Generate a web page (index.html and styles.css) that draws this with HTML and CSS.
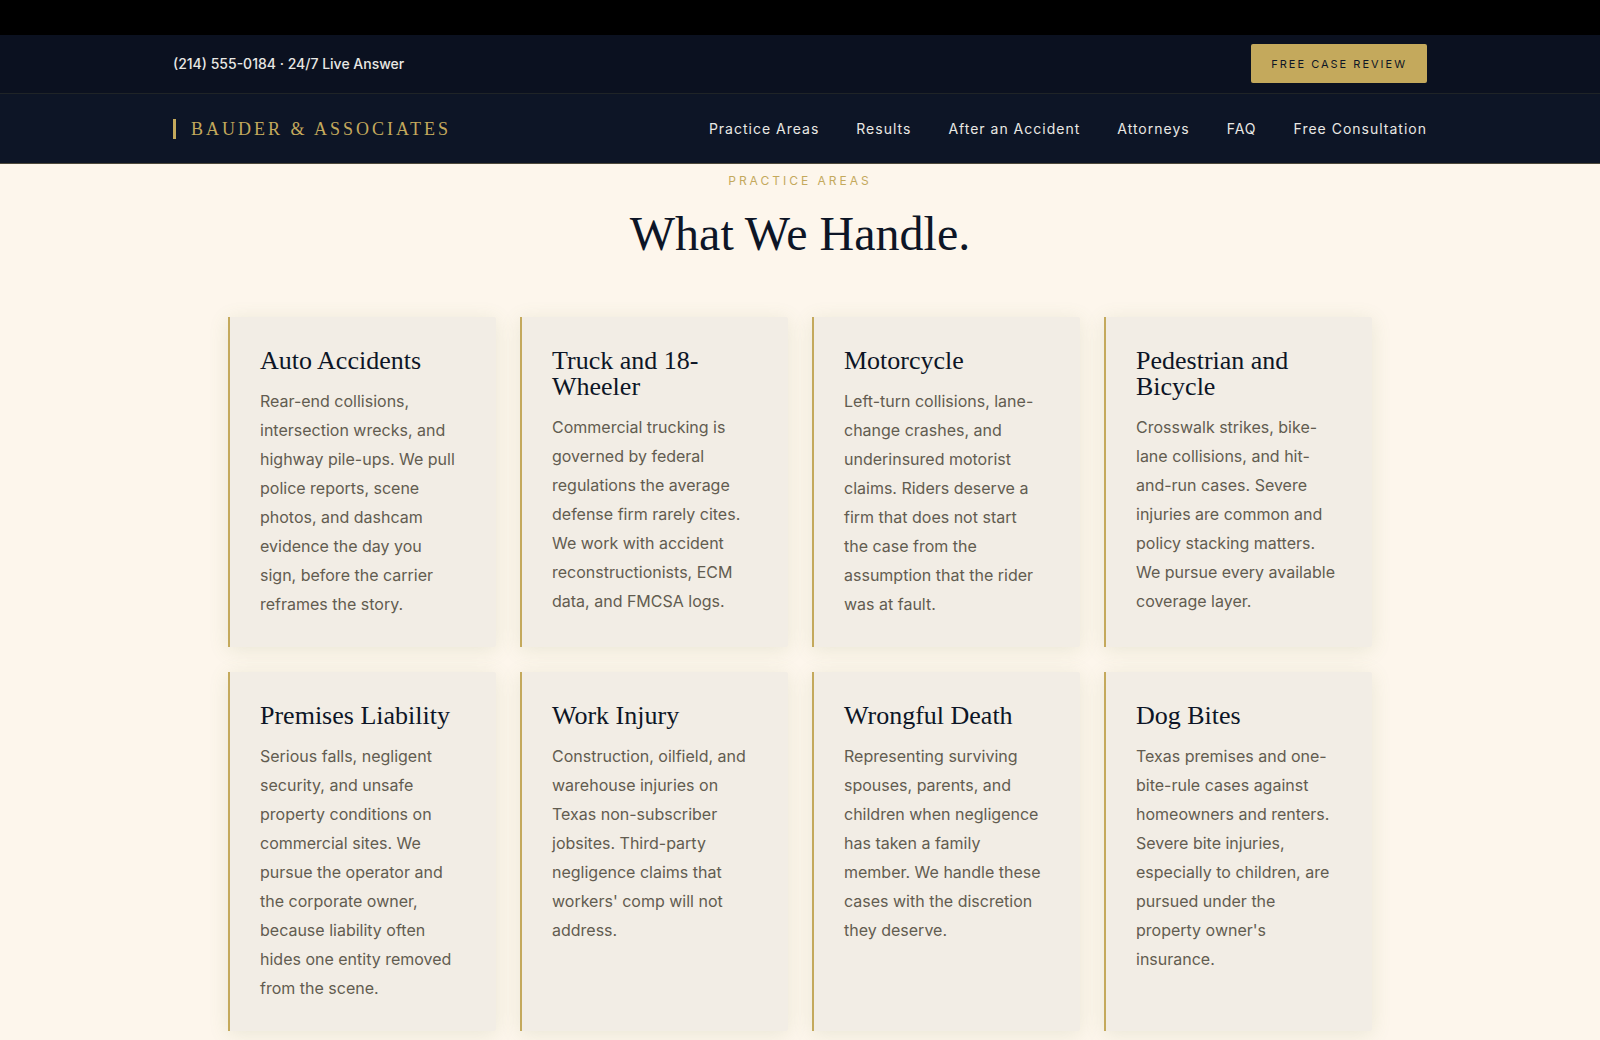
FILE: index.html
```html
<!DOCTYPE html>
<html lang="en">
<head>
  <meta charset="UTF-8">
  <meta name="viewport" content="width=device-width, initial-scale=1">
  <title>Bauder &amp; Associates</title>
  <link rel="stylesheet" href="styles.css">
</head>
<body>
  <header class="site-header">
    <div class="topbar">
      <div class="container">
        <a class="phone" href="tel:+12145550184">(214) 555-0184 · 24/7 Live Answer</a>
        <button class="btn-review" type="button">FREE CASE REVIEW</button>
      </div>
    </div>
    <div class="navbar">
      <div class="container">
        <a class="logo" href="#">BAUDER &amp; ASSOCIATES</a>
        <nav class="nav-links">
          <a href="#practice">Practice Areas</a>
          <a href="#results">Results</a>
          <a href="#after">After an Accident</a>
          <a href="#attorneys">Attorneys</a>
          <a href="#faq">FAQ</a>
          <a href="#consultation">Free Consultation</a>
        </nav>
      </div>
    </div>
  </header>

  <main>
    <section class="practice" id="practice">
      <p class="eyebrow">PRACTICE AREAS</p>
      <h2>What We Handle.</h2>
      <div class="cards">
        <article class="card">
          <h3>Auto Accidents</h3>
          <p>Rear-end collisions, intersection wrecks, and highway pile-ups. We pull police reports, scene photos, and dashcam evidence the day you sign, before the carrier reframes the story.</p>
        </article>
        <article class="card">
          <h3>Truck and 18-Wheeler</h3>
          <p>Commercial trucking is governed by federal regulations the average defense firm rarely cites. We work with accident reconstructionists, ECM data, and FMCSA logs.</p>
        </article>
        <article class="card">
          <h3>Motorcycle</h3>
          <p>Left-turn collisions, lane-change crashes, and underinsured motorist claims. Riders deserve a firm that does not start the case from the assumption that the rider was at fault.</p>
        </article>
        <article class="card">
          <h3>Pedestrian and Bicycle</h3>
          <p>Crosswalk strikes, bike-lane collisions, and hit-and-run cases. Severe injuries are common and policy stacking matters. We pursue every available coverage layer.</p>
        </article>
        <article class="card">
          <h3>Premises Liability</h3>
          <p>Serious falls, negligent security, and unsafe property conditions on commercial sites. We pursue the operator and the corporate owner, because liability often hides one entity removed from the scene.</p>
        </article>
        <article class="card">
          <h3>Work Injury</h3>
          <p>Construction, oilfield, and warehouse injuries on Texas non-subscriber jobsites. Third-party negligence claims that workers' comp will not address.</p>
        </article>
        <article class="card">
          <h3>Wrongful Death</h3>
          <p>Representing surviving spouses, parents, and children when negligence has taken a family member. We handle these cases with the discretion they deserve.</p>
        </article>
        <article class="card">
          <h3>Dog Bites</h3>
          <p>Texas premises and one-bite-rule cases against homeowners and renters. Severe bite injuries, especially to children, are pursued under the property owner's insurance.</p>
        </article>
      </div>
    </section>
  </main>
</body>
</html>
```
FILE: styles.css
```css
* {
  box-sizing: border-box;
}
body {
  margin: 0;
  background-color: #fdf6ec;
  color: #0d1526;
  font-family: Inter, "Liberation Sans", sans-serif;
}
a {
  color: inherit;
  text-decoration: none;
}
.container {
  max-width: 1254px;
  margin: 0 auto;
  display: flex;
  align-items: center;
  justify-content: space-between;
}

/* header */
.site-header {
  border-top: 35px solid #000;
  color: #e9e8e4;
}
.topbar {
  background-color: #0b1120;
  border-bottom: 1px solid #1f2427;
  padding: 9px 0 10px;
}
.phone {
  font-size: 14px;
  font-weight: 500;
}
.btn-review {
  height: 39px;
  padding: 0 20px;
  border: none;
  border-radius: 2px;
  background-color: #c4a95c;
  color: #0d1526;
  font-family: inherit;
  font-size: 11px;
  letter-spacing: 2px;
  cursor: pointer;
}
.navbar {
  background-color: #0d1526;
  border-bottom: 1px solid #4d493b;
}
.navbar .container {
  min-height: 69px;
}
.logo {
  border-left: 3px solid #c4a95c;
  padding-left: 15px;
  color: #c4a95c;
  font-family: "Liberation Serif", serif;
  font-size: 18px;
  line-height: 20px;
  letter-spacing: 3px;
}
.nav-links {
  display: flex;
  gap: 37px;
  font-size: 14px;
  letter-spacing: 1px;
}
.nav-links a:hover {
  color: #c4a95c;
}

/* practice areas */
.practice {
  max-width: 1144px;
  margin: 0 auto;
  padding: 8px 0 80px;
}
.eyebrow {
  margin: 0 0 18px;
  color: #c4a95c;
  font-size: 12px;
  line-height: 18px;
  letter-spacing: 3px;
  text-align: center;
}
h2, h3 {
  font-family: "Liberation Serif", serif;
  font-weight: 400;
}
h2 {
  margin: 0 0 57px;
  font-size: 48px;
  line-height: 52px;
  text-align: center;
}
.cards {
  display: grid;
  grid-template-columns: repeat(4, 1fr);
  gap: 25px 24px;
}
.card {
  padding: 31px 36px 28px 30px;
  border-left: 2px solid #c4a95c;
  border-radius: 0 2px 2px 0;
  background-color: #f2ede5;
  box-shadow: 0 3px 20px rgba(110, 140, 80, 0.14);
}
.card h3 {
  margin: 0 0 13px;
  font-size: 26px;
  line-height: 26px;
}
.card p {
  margin: 0;
  color: #625c50;
  font-size: 16px;
  line-height: 29px;
}
```
